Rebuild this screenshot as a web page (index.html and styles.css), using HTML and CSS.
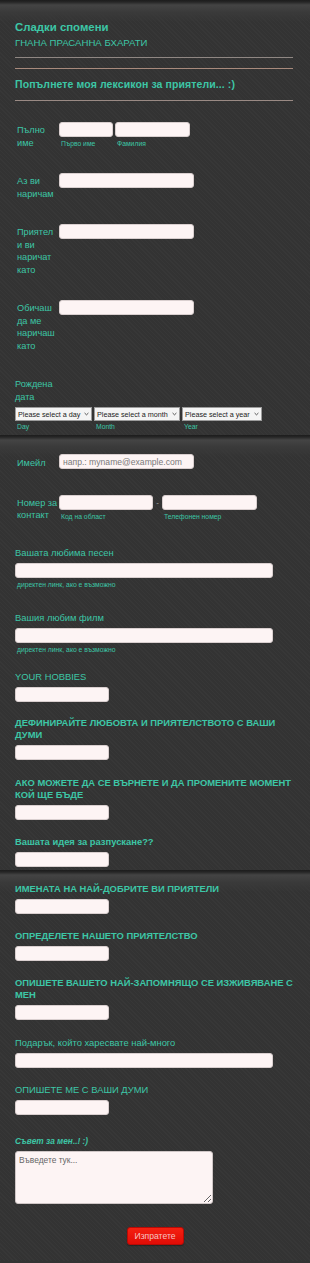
FILE: index.html
```html
<!DOCTYPE html>
<html lang="bg">
<head>
<meta charset="utf-8">
<title>Сладки спомени</title>
<link rel="stylesheet" href="styles.css">
</head>
<body>
<form class="form">
  <section class="section s1">
    <div class="title">Сладки спомени</div>
    <div class="subtitle">ГНАНА ПРАСАННА БХАРАТИ</div>
    <div class="hr hr-a"></div>
    <div class="hr hr-b"></div>
    <div class="heading">Попълнете моя лексикон за приятели... :)</div>
    <div class="hr hr-c"></div>

    <div class="row left first">
      <div class="lbl">Пълно име</div>
      <div class="ctrl pair">
        <div class="field"><input class="inp w54" type="text"><div class="sub">Първо име</div></div>
        <div class="field"><input class="inp w75" type="text"><div class="sub">Фамилия</div></div>
      </div>
    </div>
    <div class="row left">
      <div class="lbl">Аз ви наричам</div>
      <div class="ctrl"><input class="inp w135" type="text"></div>
    </div>
    <div class="row left">
      <div class="lbl">Приятели ви наричат като</div>
      <div class="ctrl"><input class="inp w135" type="text"></div>
    </div>
    <div class="row left">
      <div class="lbl">Обичаш да ме наричаш като</div>
      <div class="ctrl"><input class="inp w135" type="text"></div>
    </div>
    <div class="row date">
      <div class="lbl">Рождена дата</div>
      <div class="selects">
        <div class="field"><div class="select sw1"><span>Please select a day</span><svg class="chev" viewBox="0 0 6 4"><path d="M0.7 0.8 L3 3 L5.3 0.8" fill="none" stroke="#333" stroke-width="1"/></svg></div><div class="sub">Day</div></div>
        <div class="field"><div class="select sw2"><span>Please select a month</span><svg class="chev" viewBox="0 0 6 4"><path d="M0.7 0.8 L3 3 L5.3 0.8" fill="none" stroke="#333" stroke-width="1"/></svg></div><div class="sub">Month</div></div>
        <div class="field"><div class="select sw3"><span>Please select a year</span><svg class="chev" viewBox="0 0 6 4"><path d="M0.7 0.8 L3 3 L5.3 0.8" fill="none" stroke="#333" stroke-width="1"/></svg></div><div class="sub">Year</div></div>
      </div>
    </div>
  </section>

  <section class="section s2">
    <div class="row left email">
      <div class="lbl">Имейл</div>
      <div class="ctrl"><input class="inp w135 ph" type="email" placeholder="напр.: myname@example.com"></div>
    </div>
    <div class="row left phone">
      <div class="lbl">Номер за контакт</div>
      <div class="ctrl pair">
        <div class="field"><input class="inp w94" type="text"><div class="sub">Код на област</div></div>
        <span class="dash">-</span>
        <div class="field"><input class="inp w95" type="text"><div class="sub">Телефонен номер</div></div>
      </div>
    </div>
    <div class="row top g25">
      <div class="lbl">Вашата любима песен</div>
      <input class="inp w258" type="text">
      <div class="sub">директен линк, ако е възможно</div>
    </div>
    <div class="row top g23">
      <div class="lbl">Вашия любим филм</div>
      <input class="inp w258" type="text">
      <div class="sub">директен линк, ако е възможно</div>
    </div>
    <div class="row top g17">
      <div class="lbl caps">YOUR HOBBIES</div>
      <input class="inp w94" type="text">
    </div>
    <div class="row top g15">
      <div class="lbl bold narrow">ДЕФИНИРАЙТЕ ЛЮБОВТА И ПРИЯТЕЛСТВОТО С ВАШИ ДУМИ</div>
      <input class="inp w94" type="text">
    </div>
    <div class="row top g17">
      <div class="lbl bold">АКО МОЖЕТЕ ДА СЕ ВЪРНЕТЕ И ДА ПРОМЕНИТЕ МОМЕНТ КОЙ ЩЕ БЪДЕ</div>
      <input class="inp w94" type="text">
    </div>
    <div class="row top g16">
      <div class="lbl small">Вашата идея за разпускане??</div>
      <input class="inp w94" type="text">
    </div>
  </section>

  <section class="section s3">
    <div class="row top g0">
      <div class="lbl bold">ИМЕНАТА НА НАЙ-ДОБРИТЕ ВИ ПРИЯТЕЛИ</div>
      <input class="inp w94" type="text">
    </div>
    <div class="row top g16">
      <div class="lbl bold">ОПРЕДЕЛЕТЕ НАШЕТО ПРИЯТЕЛСТВО</div>
      <input class="inp w94" type="text">
    </div>
    <div class="row top g16">
      <div class="lbl bold">ОПИШЕТЕ ВАШЕТО НАЙ-ЗАПОМНЯЩО СЕ ИЗЖИВЯВАНЕ С МЕН</div>
      <input class="inp w94" type="text">
    </div>
    <div class="row top g17">
      <div class="lbl gift">Подарък, който харесвате най-много</div>
      <input class="inp w258" type="text">
    </div>
    <div class="row top g16">
      <div class="lbl caps">ОПИШЕТЕ МЕ С ВАШИ ДУМИ</div>
      <input class="inp w94" type="text">
    </div>
    <div class="row top g20">
      <div class="lbl small it">Съвет за мен..! :)</div>
      <textarea class="area" placeholder="Въведете тук..."></textarea>
    </div>
    <div class="actions">
      <button class="submit" type="button">Изпратете</button>
    </div>
  </section>
</form>
</body>
</html>
```

FILE: styles.css
```css
* { box-sizing: border-box; }

body {
  margin: 0;
  background-color: #333333;
  font-family: "Liberation Sans", Arial, sans-serif;
  color: #3dc6a6;
}

.form {
  margin: 0;
}

.section {
  padding: 0 15px;
  background-color: #333333;
  background-image:
    linear-gradient(to bottom, #1c1c1c 0, #262626 2px, #444444 5px, #3a3a3a 12px, rgba(51,51,51,0) 22px),
    repeating-linear-gradient(45deg, rgba(255,255,255,0.018) 0 1px, rgba(0,0,0,0) 1px 3px);
}

.s1 { padding-top: 19px; padding-bottom: 4px; }
.s2 { padding-top: 19px; padding-bottom: 3px; }
.s3 { padding-top: 13px; padding-bottom: 16px; }

.title {
  font-size: 11.4px;
  font-weight: bold;
  line-height: 16px;
}

.subtitle {
  font-size: 9.6px;
  line-height: 12px;
  margin-top: 2px;
}

.hr {
  height: 1px;
  width: 278px;
}
.hr-a { background: #8f8783; margin-top: 8px; }
.hr-b { background: #a88a7c; margin-top: 10px; }
.hr-c { background: #9a8a84; margin-top: 8px; }

.heading {
  font-size: 10.5px;
  font-weight: bold;
  line-height: 16px;
  margin-top: 7px;
  letter-spacing: 0.1px;
}

/* rows */
.row.left {
  display: flex;
  align-items: flex-start;
  padding-top: 24px;
}
.row.left.first { padding-top: 21px; }
.row.left .lbl {
  width: 44px;
  flex: none;
  padding-left: 2px;
  padding-right: 2px;
  padding-top: 2px;
  font-size: 9.2px;
  line-height: 12.5px;
  overflow-wrap: anywhere;
}
.row.left.email { padding-top: 0; }
.row.left.email .lbl { padding-top: 3px; }
.row.left.phone { padding-top: 25px; }
.row.left.phone .lbl { padding-right: 0; }

.ctrl { display: block; }
.pair { display: flex; align-items: flex-start; }
.pair .field + .field { margin-left: 2px; }
.dash {
  font-size: 8px;
  line-height: 15px;
  width: 9px;
  text-align: center;
  color: #aaa;
}

.row.date { padding-top: 26px; }
.row.date .lbl {
  width: 44px;
  font-size: 9.2px;
  line-height: 12.5px;
}

.selects {
  display: flex;
  margin-top: 4px;
}
.selects .field + .field { margin-left: 2px; }

.select {
  height: 14px;
  background: #f4f4f4;
  border: 1px solid #9c9c9c;
  display: flex;
  align-items: center;
  justify-content: space-between;
  padding: 0 2px 0 2px;
  font-family: "Liberation Sans", Arial, sans-serif;
  font-size: 7.2px;
  color: #222;
  white-space: nowrap;
  overflow: hidden;
}
.sw1 { width: 77px; }
.sw2 { width: 86px; }
.sw3 { width: 80px; }
.chev { width: 5px; height: 4px; flex: none; }

.row.top { display: block; }
.row.top .lbl {
  font-size: 9.4px;
  line-height: 12px;
  width: 280px;
}
.row.top .lbl.narrow { width: 262px; }
.row.top .inp, .row.top .area { margin-top: 4px; }

.g0 { padding-top: 0; }
.g15 { padding-top: 15px; }
.g16 { padding-top: 16px; }
.g17 { padding-top: 17px; }
.g20 { padding-top: 20px; }
.g23 { padding-top: 23px; }
.g25 { padding-top: 25px; }

.lbl.bold { font-weight: bold; font-size: 8.2px; }
.lbl.caps { font-size: 9.4px; }
.lbl.small { font-weight: bold; font-size: 7.6px; }
.lbl.small.it { font-style: italic; font-size: 8.3px; }
.lbl.gift { font-size: 9.4px; }

/* inputs */
.inp {
  display: block;
  height: 15px;
  padding: 0 3px;
  margin: 0;
  background: #fdf4f4;
  border: 1px solid #d9cfcf;
  border-radius: 3px;
  font-family: "Liberation Sans", Arial, sans-serif;
  font-size: 8.6px;
  color: #555;
  outline: none;
}
.inp::placeholder { color: #7a7a7a; }
.w54 { width: 54px; }
.w75 { width: 75px; }
.w94 { width: 94px; }
.w95 { width: 95px; }
.w135 { width: 135px; }
.w258 { width: 258px; }

.sub {
  font-size: 6.8px;
  line-height: 8px;
  margin-top: 3px;
  padding-left: 2px;
  white-space: nowrap;
}
.selects .sub { margin-top: 2px; }

.area {
  display: block;
  width: 198px;
  height: 53px;
  margin: 0;
  padding: 3px;
  background: #fdf4f4;
  border: 1px solid #cfc6c6;
  border-radius: 3px;
  font-family: "Liberation Sans", Arial, sans-serif;
  font-size: 8.4px;
  color: #555;
  outline: none;
}
.area::placeholder { color: #666; }

.actions {
  display: flex;
  justify-content: center;
  margin-top: 23px;
}
.submit {
  width: 57px;
  height: 18px;
  padding: 0;
  background: linear-gradient(to bottom, #f52010, #e00c06);
  border: 1px solid #b80a05;
  border-radius: 3px;
  color: #f6c4c0;
  font-family: "Liberation Sans", Arial, sans-serif;
  font-size: 8.6px;
  box-shadow: 0 1px 1px rgba(0,0,0,0.3);
}
```
